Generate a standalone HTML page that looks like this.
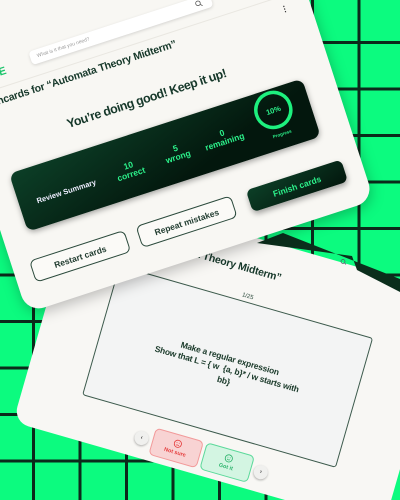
<!DOCTYPE html>
<html><head><meta charset="utf-8"><style>
*{margin:0;padding:0;box-sizing:border-box}
html,body{width:400px;height:500px;overflow:hidden}
body{position:relative;background-color:#0cfb7f;
background-image:linear-gradient(90deg,#0b2a1b 3px,transparent 3px),linear-gradient(180deg,#0b2a1b 3px,transparent 3px);
background-size:46.5px 46.5px;background-position:32px 41px;
font-family:"Liberation Sans",sans-serif;font-weight:bold}
#wrap{position:absolute;left:0;top:0;width:400px;height:500px;overflow:hidden}
.card{position:absolute;transform-origin:0 100%;border-radius:18px;overflow:hidden}
.a{position:absolute;white-space:nowrap}
.c1{left:27px;top:-107px;width:365px;height:420px;background:#f8f7f3;transform:rotate(-18deg);z-index:3;box-shadow:0 4px 14px rgba(0,0,0,.25)}
.c2{left:13px;top:178px;width:385px;height:244px;background:#f8f7f4;transform:rotate(16deg);z-index:1;overflow:visible;border-radius:16px}
.btn{position:absolute;bottom:26px;height:23px;width:100px;border:1.3px solid #2b4a3c;border-radius:6px;background:#fbfaf7;color:#1f3a2e;font-size:8.5px;display:flex;align-items:center;justify-content:center}
.stat{position:absolute;color:#2cf08a;font-size:8.5px;line-height:9px;text-align:center;transform:translateX(-50%)}
</style></head><body><div id="wrap">

<div class="card c2">
  <div class="a" style="right:167px;bottom:206px;font-size:10.5px;color:#16382a;letter-spacing:-0.2px">Flashcards for “Automata Theory Midterm”</div>
  <div class="a" style="left:191px;bottom:182px;transform:translateX(-50%);font-size:6px;color:#2b4a3c;font-weight:normal">1/25</div>
  <div class="a" style="left:59px;bottom:45px;width:264px;height:135px;border:1px solid #3c5a4c;background:#f3f4f4;border-radius:3px"></div>
  <div class="a" style="left:191px;bottom:92px;transform:translateX(-50%);font-size:8.5px;line-height:11.5px;color:#1a3a2a;text-align:center;letter-spacing:-0.2px">Make a regular expression<br>Show that L = { w &nbsp;{a, b}* / w starts with<br>bb}</div>
  <div class="a" style="left:121px;bottom:13px;width:14px;height:14px;border-radius:50%;background:#f0f0ee;box-shadow:0 1px 2px rgba(0,0,0,.3);font-size:6px;color:#444;text-align:center;line-height:14px">‹</div>
  <div class="a" style="left:139px;bottom:6px;width:50px;height:28px;border:1px solid #f29a9a;background:#f8d3d3;border-radius:5px;color:#e53e3e;font-size:5.5px;text-align:center;padding-top:4px">
    <svg width="9" height="9" viewBox="0 0 10 10"><circle cx="5" cy="5" r="4" fill="none" stroke="#e53e3e" stroke-width="0.9"/><path d="M3.3 7 Q5 5.6 6.7 7" fill="none" stroke="#e53e3e" stroke-width="0.8"/><circle cx="3.7" cy="4" r=".5" fill="#e53e3e"/><circle cx="6.3" cy="4" r=".5" fill="#e53e3e"/></svg><br>Not sure</div>
  <div class="a" style="left:192px;bottom:6px;width:50px;height:28px;border:1px solid #5bd99a;background:#d3f5e2;border-radius:5px;color:#2bb36b;font-size:5.5px;text-align:center;padding-top:4px">
    <svg width="9" height="9" viewBox="0 0 10 10"><circle cx="5" cy="5" r="4" fill="none" stroke="#2bb36b" stroke-width="0.9"/><path d="M3.3 6 Q5 7.6 6.7 6" fill="none" stroke="#2bb36b" stroke-width="0.8"/><circle cx="3.7" cy="4" r=".5" fill="#2bb36b"/><circle cx="6.3" cy="4" r=".5" fill="#2bb36b"/></svg><br>Got it</div>
  <div class="a" style="left:245px;bottom:13px;width:14px;height:14px;border-radius:50%;background:#f0f0ee;box-shadow:0 1px 2px rgba(0,0,0,.3);font-size:6px;color:#444;text-align:center;line-height:14px">›</div>
</div>

<svg style="position:absolute;left:0;top:0;z-index:2" width="400" height="500">
  <polygon points="257,243 283,233 400,279 400,292 357,270 352,256" fill="#0b2e1c"/>
  <circle cx="343" cy="261.5" r="2" fill="none" stroke="#556" stroke-width=".7"/>
  <line x1="344.5" y1="263" x2="346" y2="264.5" stroke="#556" stroke-width=".7"/>
</svg>

<div class="card c1">
  <div class="a" style="left:0;right:0;bottom:222px;height:1px;background:#e9e7e1"></div>
  <div class="a" style="right:310px;bottom:231px;font-size:11px;color:#19c46a">NOTE</div>
  <div class="a" style="left:82px;bottom:234px;width:190px;height:14px;background:#fff;border-radius:4px;box-shadow:0 1px 3px rgba(0,0,0,.15);font-size:5px;color:#9a9a9a;font-weight:normal;padding:4px 0 0 7px">What is it that you need?
    <svg style="position:absolute;right:9px;top:3px" width="8" height="8" viewBox="0 0 8 8"><circle cx="3.3" cy="3.3" r="2.3" fill="none" stroke="#555" stroke-width=".8"/><line x1="5" y1="5" x2="7" y2="7" stroke="#555" stroke-width=".8"/></svg></div>
  <div class="a" style="left:335px;bottom:205px;font-size:8px;color:#333">⋮</div>
  <div class="a" style="left:17px;bottom:204px;font-size:10.5px;color:#16382a;letter-spacing:-0.2px">Flashcards for “Automata Theory Midterm”</div>
  <div class="a" style="left:180px;bottom:160px;transform:translateX(-50%);font-size:12.5px;color:#16382a;letter-spacing:-0.5px">You’re doing good! Keep it up!</div>
  <div class="a" style="left:26px;bottom:77px;width:308px;height:61px;border-radius:8px;background:linear-gradient(160deg,#0c3f27,#03170d 70%);box-shadow:0 2px 6px rgba(0,0,0,.35)"></div>
  <div class="a" style="left:75px;bottom:99px;transform:translateX(-50%);font-size:7.5px;color:#eef">Review Summary</div>
  <div class="stat" style="left:142px;bottom:95px">10<br>correct</div>
  <div class="stat" style="left:192px;bottom:97px">5<br>wrong</div>
  <div class="stat" style="left:241px;bottom:97px">0<br>remaining</div>
  <svg class="a" style="left:276px;bottom:96px" width="42" height="42" viewBox="0 0 42 42"><circle cx="21" cy="21" r="17.5" fill="none" stroke="#1df07e" stroke-width="3.5"/><text x="21" y="24" text-anchor="middle" font-family="Liberation Sans" font-size="7.5" fill="#2cf08a">10%</text></svg>
  <div class="a" style="left:298px;bottom:89px;transform:translateX(-50%);font-size:4.5px;color:#2cf08a">Progress</div>
  <div class="btn" style="left:18px">Restart cards</div>
  <div class="btn" style="left:130px">Repeat mistakes</div>
  <div class="btn" style="left:246px;width:100px;border:none;background:linear-gradient(160deg,#0c3f27,#03170d);color:#2cf08a;box-shadow:0 3px 6px rgba(0,0,0,.35)">Finish cards</div>
</div>
</div></body></html>
